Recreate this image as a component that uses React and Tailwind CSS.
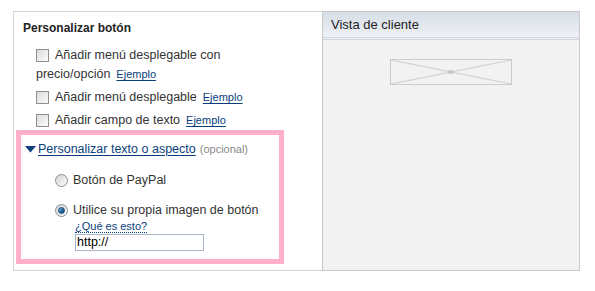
import React from 'react';

const Checkbox = () => (
  <span className="inline-block w-[13px] h-[13px] shrink-0 border border-[#8e8f8f] bg-gradient-to-br from-[#dcdcdc] to-[#fbfbfb]" />
);

const Radio = ({ checked }) => (
  <span className="relative inline-flex w-[13px] h-[13px] shrink-0 items-center justify-center rounded-full border border-[#8e8f8f] bg-gradient-to-br from-[#d6d6d6] to-[#fafafa]">
    {checked && (
      <span className="w-[7px] h-[7px] rounded-full bg-gradient-to-br from-[#8ec6ec] via-[#2a6fa8] to-[#0c3f6e] border border-[#1b4a75]" />
    )}
  </span>
);

const Ejemplo = ({ inline }) => (
  <a className={`${inline ? 'ml-[6px] ' : ''}text-[11px] text-[#0b3e7c] underline underline-offset-[2px]`}>Ejemplo</a>
);

export default function App() {
  return (
    <div className="w-[595px] h-[291px] bg-white text-[12.5px] text-[#333] font-['Liberation_Sans',Arial,sans-serif]">
      <div className="ml-[13px] pt-[11px] flex w-[567px] h-[271px]">
        {/* Left: options */}
        <div className="w-[309px] h-[260px] border-l border-t border-b border-[#d4d4d4] pl-[1px]">
          <div className="pl-[8px] pt-[8px] text-[12px] font-bold text-[#222] leading-[16px]">Personalizar botón</div>

          <div className="pl-[21px] mt-[10px] leading-[19px]">
            <div className="flex items-center gap-[6px]">
              <Checkbox />
              <span>Añadir menú desplegable con</span>
            </div>
            <div>
              precio/opción
              <Ejemplo inline />
            </div>
            <div className="flex items-center gap-[6px] mt-[4px]">
              <Checkbox />
              <span>Añadir menú desplegable</span>
              <Ejemplo />
            </div>
            <div className="flex items-center gap-[6px] mt-[4px]">
              <Checkbox />
              <span>Añadir campo de texto</span>
              <Ejemplo />
            </div>
          </div>

          <div className="ml-[1px] w-[268px] h-[134px] border-[5px] border-[#ffafc9]">
            <div className="flex items-center pl-[4px] pt-[6px] leading-[16px]">
              <svg width="11" height="7" viewBox="0 0 11 7" className="mr-[2px]">
                <path d="M0 0 H11 L5.5 6.5 Z" fill="#0b3e7c" />
              </svg>
              <a className="text-[#0b3e7c] underline underline-offset-[2px]">Personalizar texto o aspecto</a>
              <span className="ml-[4px] text-[11px] text-[#8a8a8a]">(opcional)</span>
            </div>

            <div className="pl-[34px] mt-[15px] leading-[16px]">
              <div className="flex items-center gap-[5px]">
                <Radio />
                <span>Botón de PayPal</span>
              </div>
              <div className="flex items-center gap-[5px] mt-[14px]">
                <Radio checked />
                <span>Utilice su propia imagen de botón</span>
              </div>
              <div className="pl-[20px]">
                <a className="inline-block text-[11px] leading-[12px] text-[#0b3e7c] border-b border-dotted border-[#0b3e7c]">¿Qué es esto?</a>
                <div className="w-[129px] h-[17px] border border-[#a8b6c8] bg-white text-[12.5px] text-black leading-[15px] pl-[1px]">
                  http://
                </div>
              </div>
            </div>
          </div>
        </div>

        {/* Right: preview */}
        <div className="flex-1 h-[260px] border border-[#c9c9c9] bg-[#f2f2f2] flex flex-col">
          <div className="h-[25px] bg-gradient-to-b from-[#d7dee7] to-[#eef1f5] flex items-center pl-[8px] text-[13px] text-[#222]">
            Vista de cliente
          </div>
          <div className="h-[3px] border-t border-b border-[#cfd6df] bg-[#eef1f5]" />
          <div className="flex justify-center mt-[19px]">
            <svg width="122" height="26" viewBox="0 0 122 26">
              <rect x="0.5" y="0.5" width="121" height="25" fill="none" stroke="#cccccc" />
              <line x1="1" y1="1" x2="121" y2="25" stroke="#cccccc" />
              <line x1="121" y1="1" x2="1" y2="25" stroke="#cccccc" />
              <rect x="58" y="11" width="5" height="4" fill="#cccccc" />
            </svg>
          </div>
        </div>
      </div>
    </div>
  );
}
